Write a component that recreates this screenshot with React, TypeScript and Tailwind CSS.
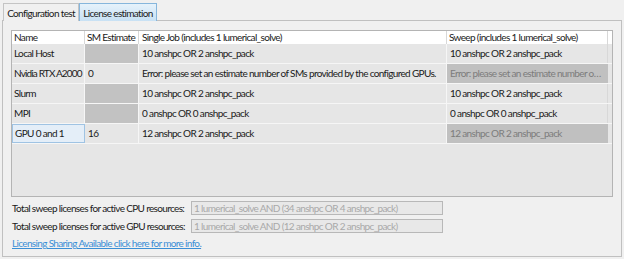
import React from "react";

const font = { fontFamily: "Lato, 'Noto Sans', sans-serif" };

type Row = {
  name: string;
  sm: string;
  smGray?: boolean;
  single: string;
  sweep: string;
  sweepGray?: boolean;
  selected?: boolean;
  tight?: boolean;
};

const rows: Row[] = [
  { name: "Local Host", sm: "", smGray: true, single: "10 anshpc OR 2 anshpc_pack", sweep: "10 anshpc OR 2 anshpc_pack" },
  {
    name: "Nvidia RTX A2000",
    sm: "0",
    single: "Error: please set an estimate number of SMs provided by the configured GPUs.",
    sweep: "Error: please set an estimate number o…",
    sweepGray: true,
    tight: true,
  },
  { name: "Slurm", sm: "", smGray: true, single: "10 anshpc OR 2 anshpc_pack", sweep: "10 anshpc OR 2 anshpc_pack" },
  { name: "MPI", sm: "", smGray: true, single: "0 anshpc OR 0 anshpc_pack", sweep: "0 anshpc OR 0 anshpc_pack" },
  { name: "GPU 0 and 1", sm: "16", single: "12 anshpc OR 2 anshpc_pack", sweep: "12 anshpc OR 2 anshpc_pack", sweepGray: true, selected: true },
];

export default function App() {
  return (
    <div
      className="w-[624px] h-[259px] bg-[#f0f0f0] text-[10px] tracking-[-0.65px] text-[#1a1a1a] pt-[3px] pl-[2px] overflow-hidden"
      style={font}
    >
      <div className="flex pl-[1px] h-[18px] relative z-10">
        <div className="h-[18px] w-[76px] border border-[#c4c4c4] border-b-0 bg-[#f0f0f0] flex items-center justify-center leading-none whitespace-nowrap">
          Configuration test
        </div>
        <div className="h-[18px] w-[78px] border border-[#86b6dc] border-b-0 bg-gradient-to-b from-[#e6f2fb] to-[#c8e1f4] flex items-center justify-center leading-none whitespace-nowrap">
          License estimation
        </div>
      </div>
      <div className="w-[620px] h-[237px] -mt-[1px] border border-[#c0c0c0] bg-[#f0f0f0] pt-[9px] pl-[8px] flex flex-col">
        <div className="w-[602px] h-[167px] border border-[#b4b4b4] bg-[#e6e6e6] flex flex-col">
          <div className="grid grid-cols-[73px_54px_308px_1fr] h-[13px] bg-white leading-[13px] whitespace-nowrap">
            <div className="pl-[2px] border-r border-[#d8d8d8]">Name</div>
            <div className="pl-[2px] border-r border-[#d8d8d8]">SM Estimate</div>
            <div className="pl-[3px] border-r border-[#d8d8d8]">Single Job (includes 1 lumerical_solve)</div>
            <div className="pl-[2px] mr-[4px] border-r border-[#d8d8d8]">Sweep (includes 1 lumerical_solve)</div>
          </div>
          {rows.map((r) => (
            <div key={r.name} className="grid grid-cols-[73px_54px_308px_1fr] h-[20px] leading-[19px] border-b border-[#f6f6f6] whitespace-nowrap">
              <div
                className={
                  r.selected
                    ? "pl-[2px] border border-[#9fc3e3] bg-[#e4eef8] leading-[17px] overflow-hidden"
                    : r.tight
                    ? "pl-[2px] border-r border-[#f6f6f6] tracking-[-0.85px]"
                    : "pl-[2px] border-r border-[#f6f6f6] overflow-hidden"
                }
              >
                {r.name}
              </div>
              <div className={r.smGray ? "bg-[#c2c2c2] border-r border-[#f6f6f6]" : "pl-[3px] border-r border-[#f6f6f6]"}>{r.sm}</div>
              <div className="pl-[3px] border-r border-[#f6f6f6] overflow-hidden">{r.single}</div>
              <div
                className={
                  r.sweepGray
                    ? "pl-[3px] mr-[4px] bg-[#c0c0c0] text-[#7c7c7c] overflow-hidden"
                    : "pl-[3px] mr-[4px] border-r border-[#d8d8d8] overflow-hidden"
                }
              >
                {r.sweep}
              </div>
            </div>
          ))}
          <div className="flex-1 flex justify-end">
            <div className="w-[4px]" />
          </div>
        </div>
        <div className="flex items-center mt-[4px] h-[14px]">
          <div className="w-[180px] pl-[1px] whitespace-nowrap">Total sweep licenses for active CPU resources:</div>
          <div className="w-[252px] h-[14px] border border-[#b8b8b8] bg-[#e8e8e8] text-[#a8a8a8] leading-[12px] pl-[2px] whitespace-nowrap overflow-hidden">
            1 lumerical_solve AND (34 anshpc OR 4 anshpc_pack)
          </div>
        </div>
        <div className="flex items-center mt-[4px] h-[14px]">
          <div className="w-[180px] pl-[1px] whitespace-nowrap">Total sweep licenses for active GPU resources:</div>
          <div className="w-[252px] h-[14px] border border-[#b8b8b8] bg-[#e8e8e8] text-[#a8a8a8] leading-[12px] pl-[2px] whitespace-nowrap overflow-hidden">
            1 lumerical_solve AND (12 anshpc OR 2 anshpc_pack)
          </div>
        </div>
        <div className="mt-[3px] pl-[1px] text-[#3a8fd6] underline leading-[14px] whitespace-nowrap">
          Licensing Sharing Available click here for more info.
        </div>
      </div>
    </div>
  );
}
